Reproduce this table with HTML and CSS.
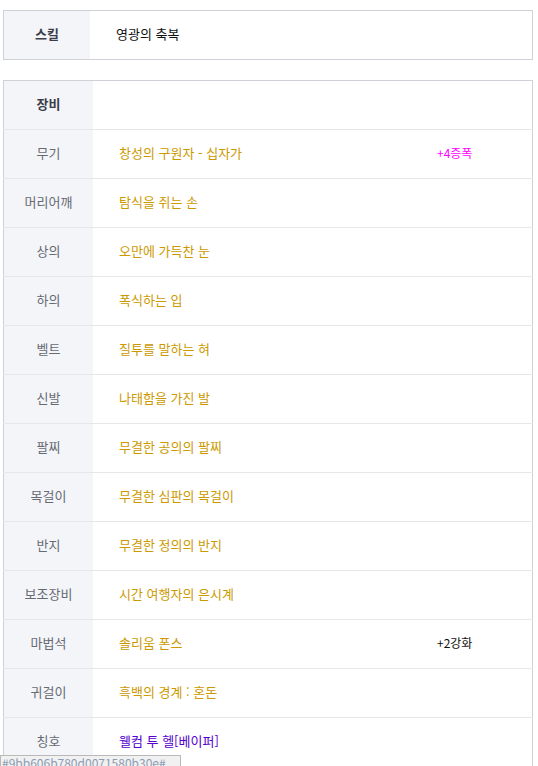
FILE: index.html
```html
<!DOCTYPE html>
<html lang="ko">
<head>
    <meta charset="UTF-8">
    <meta name="viewport" content="width=device-width, initial-scale=1.0">
    <title>장비</title>
    <link rel="stylesheet" href="styles.css">
</head>
<body>
    <table class="info-table skill-table">
        <tr>
            <th>스킬</th>
            <td class="value plain">영광의 축복</td>
        </tr>
    </table>

    <table class="info-table equip-table">
        <tr class="head-row">
            <th>장비</th>
            <td class="value"></td>
            <td class="extra"></td>
        </tr>
        <tr>
            <td class="label">무기</td>
            <td class="value">창성의 구원자 - 십자가</td>
            <td class="extra amp">+4증폭</td>
        </tr>
        <tr>
            <td class="label">머리어깨</td>
            <td class="value">탐식을 쥐는 손</td>
            <td class="extra"></td>
        </tr>
        <tr>
            <td class="label">상의</td>
            <td class="value">오만에 가득찬 눈</td>
            <td class="extra"></td>
        </tr>
        <tr>
            <td class="label">하의</td>
            <td class="value">폭식하는 입</td>
            <td class="extra"></td>
        </tr>
        <tr>
            <td class="label">벨트</td>
            <td class="value">질투를 말하는 혀</td>
            <td class="extra"></td>
        </tr>
        <tr>
            <td class="label">신발</td>
            <td class="value">나태함을 가진 발</td>
            <td class="extra"></td>
        </tr>
        <tr>
            <td class="label">팔찌</td>
            <td class="value">무결한 공의의 팔찌</td>
            <td class="extra"></td>
        </tr>
        <tr>
            <td class="label">목걸이</td>
            <td class="value">무결한 심판의 목걸이</td>
            <td class="extra"></td>
        </tr>
        <tr>
            <td class="label">반지</td>
            <td class="value">무결한 정의의 반지</td>
            <td class="extra"></td>
        </tr>
        <tr>
            <td class="label">보조장비</td>
            <td class="value">시간 여행자의 은시계</td>
            <td class="extra"></td>
        </tr>
        <tr>
            <td class="label">마법석</td>
            <td class="value">솔리움 폰스</td>
            <td class="extra">+2강화</td>
        </tr>
        <tr>
            <td class="label">귀걸이</td>
            <td class="value">흑백의 경계 : 혼돈</td>
            <td class="extra"></td>
        </tr>
        <tr>
            <td class="label">칭호</td>
            <td class="value title">웰컴 투 헬[베이퍼]</td>
            <td class="extra"></td>
        </tr>
    </table>

    <div class="status-bar">#9bb606b780d0071580b30e#</div>
</body>
</html>
```

FILE: styles.css
```css
body {
    margin: 0;
    padding: 10px 0 0 3px;
    font-family: "Noto Sans CJK KR", "Liberation Sans", sans-serif;
    font-size: 12px;
    background: #fff;
}
.info-table {
    width: 530px;
    border-collapse: collapse;
    border: 1px solid #cfd0d8;
    table-layout: fixed;
}
.info-table th,
.info-table td {
    height: 45px;
    padding: 0 0 3px 0;
    vertical-align: middle;
}
.info-table th {
    background-color: #f4f5f9;
    color: #3b3e4a;
    font-weight: bold;
    font-size: 13px;
    text-align: center;
}
.skill-table {
    margin-bottom: 20px;
}
.skill-table th {
    width: 86px;
}
.equip-table th,
.equip-table .label {
    width: 89px;
}
.equip-table tr + tr td {
    border-top: 1px solid #e6e7eb;
}
.equip-table .label {
    background-color: #f4f5f9;
    color: #666a73;
    text-align: center;
    font-size: 13px;
}
.info-table .value {
    padding-left: 26px;
    color: #cc9900;
    font-size: 13px;
}
.info-table .value.plain {
    color: #111;
}
.info-table .value.title {
    color: #5500cc;
}
.info-table .extra {
    width: 95px;
    color: #111;
    font-size: 12px;
}
.info-table .extra.amp {
    color: #ff00ff;
}
.status-bar {
    position: fixed;
    left: 0;
    bottom: -5px;
    width: 178px;
    height: 14px;
    padding-left: 1px;
    border: 1px solid #b9b9b9;
    background: #f1f1f1;
    color: #8c9cb4;
    font-size: 12px;
    line-height: 14px;
    overflow: hidden;
    white-space: nowrap;
}
```
